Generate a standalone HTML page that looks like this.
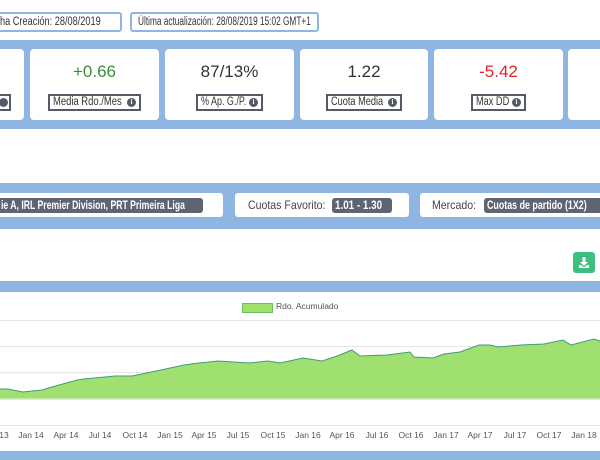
<!DOCTYPE html>
<html><head><meta charset="utf-8"><style>
*{box-sizing:border-box;margin:0;padding:0}
body{width:600px;height:460px;overflow:hidden;background:#fff;font-family:"Liberation Sans",sans-serif;color:#333;position:relative}
.abs{position:absolute}
.n{display:inline-block;transform:scaleX(.76);transform-origin:0 50%;white-space:nowrap}
.tb{position:absolute;top:12px;height:20px;border:2px solid #8fb6e3;border-radius:3px;font-size:11.5px;line-height:16px;padding:0 6px;white-space:nowrap;color:#333;overflow:hidden}
.band{position:absolute;left:0;width:600px;background:#8fb6e3}
.card{position:absolute;top:49px;height:71px;background:#fff;border-radius:4px;text-align:center}
.val{position:absolute;top:13px;left:0;right:0;font-size:17px}
.lab{position:absolute;top:45px;height:17px;border:2px solid #555a66;font-size:11.5px;line-height:13px;padding:0 3px;white-space:nowrap;color:#333;overflow:hidden;text-align:left}
.i{position:absolute;top:2px;right:3px;width:9px;height:9px;border-radius:50%;background:#555a66;color:#fff;font-size:7px;line-height:9px;text-align:center;font-weight:bold;font-family:"Liberation Serif",serif}
.fb{position:absolute;top:193px;height:24px;background:#fff;border-radius:3px;font-size:12px;line-height:24px;white-space:nowrap;color:#444;overflow:hidden}
.bd{position:absolute;top:5px;height:15px;background:#5f6472;color:#fff;font-weight:bold;border-radius:3px;padding:0 3px;line-height:15px;font-size:12px;overflow:hidden}
.xl{position:absolute;top:430px;font-size:8.5px;color:#555;transform:translateX(-50%);white-space:nowrap}
</style></head><body>
<div class="tb" style="left:-8px;width:130px"><span class="n" style="transform:scaleX(.8)">ha Creación: 28/08/2019</span></div>
<div class="tb" style="left:130px;width:189px"><span class="n" style="transform:scaleX(.72)">Última actualización: 28/08/2019 15:02 GMT+1</span></div>

<div class="band" style="top:40px;height:89px"></div>
<div class="card" style="left:-10px;width:34px"><div class="lab" style="left:10px;width:11px;border-left:none;padding:0"><span class="i" style="right:1px"></span></div></div>
<div class="card" style="left:30px;width:129px"><div class="val" style="color:#3c8a3c">+0.66</div><div class="lab" style="left:18px;width:93px"><span class="n" style="transform:scaleX(.82)">Media Rdo./Mes</span><span class="i">i</span></div></div>
<div class="card" style="left:165px;width:129px"><div class="val">87/13%</div><div class="lab" style="left:31px;width:67px"><span class="n" style="transform:scaleX(.78)">% Ap. G./P.</span><span class="i">i</span></div></div>
<div class="card" style="left:300px;width:128px"><div class="val">1.22</div><div class="lab" style="left:26px;width:76px"><span class="n" style="transform:scaleX(.8)">Cuota Media</span><span class="i">i</span></div></div>
<div class="card" style="left:434px;width:129px"><div class="val" style="color:#e0242c">-5.42</div><div class="lab" style="left:37px;width:55px"><span class="n" style="transform:scaleX(.8)">Max DD</span><span class="i">i</span></div></div>
<div class="card" style="left:568px;width:40px"></div>

<div class="band" style="top:183px;height:46px"></div>
<div class="fb" style="left:-10px;width:233px"><span class="bd" style="left:8px;width:205px"><span class="n" style="transform:scaleX(.72)">ie A, IRL Premier Division, PRT Primeira Liga</span></span></div>
<div class="fb" style="left:235px;width:174px"><span class="n" style="position:absolute;left:13px;transform:scaleX(.88)">Cuotas Favorito:</span><span class="bd" style="left:97px;width:60px"><span class="n" style="transform:scaleX(.82)">1.01 - 1.30</span></span></div>
<div class="fb" style="left:420px;width:190px"><span class="n" style="position:absolute;left:12px;transform:scaleX(.88)">Mercado:</span><span class="bd" style="left:64px;width:130px"><span class="n" style="transform:scaleX(.74)">Cuotas de partido (1X2)</span></span></div>

<div class="abs" style="left:573px;top:252px;width:22px;height:21px;background:#3dbf82;border-radius:3px">
<svg width="22" height="21" viewBox="0 0 22 21"><path d="M9.5 5h3v5h2.5l-4 4-4-4h2.5z M6 13h2l3 2.5 3-2.5h2v3H6z" fill="#fff"/></svg></div>

<div class="band" style="top:281px;height:11px"></div>
<div class="abs" style="left:242px;top:303px;width:31px;height:10px;background:#a0e070;border:1px solid #6cbf5a"></div>
<div class="abs" style="left:276px;top:301px;font-size:8.5px;color:#555">Rdo. Acumulado</div>

<svg class="abs" style="left:0;top:292px" width="600" height="160" viewBox="0 292 600 160">
<g stroke="#e6e6e6" stroke-width="1"><line x1="0" y1="320.5" x2="600" y2="320.5"/><line x1="0" y1="346.5" x2="600" y2="346.5"/><line x1="0" y1="372.5" x2="600" y2="372.5"/><line x1="0" y1="425.5" x2="600" y2="425.5"/></g>
<path d="M0 389 L8 389 L23 392 L42 390 L52 387 L77 380 L84 379 L115 376 L132 376 L161 370 L184 365 L199 363 L218 361 L249 363 L268 361 L280 363 L303 358 L322 361 L337 356 L352 350 L360 356 L387 355 L410 352 L414 357 L433 358 L444 354 L460 352 L479 345 L490 345 L498 347 L521 345 L544 344 L563 340 L571 345 L594 339 L600 341 L600 399 L0 399 Z" fill="#a0e070"/>
<path d="M0 389 L8 389 L23 392 L42 390 L52 387 L77 380 L84 379 L115 376 L132 376 L161 370 L184 365 L199 363 L218 361 L249 363 L268 361 L280 363 L303 358 L322 361 L337 356 L352 350 L360 356 L387 355 L410 352 L414 357 L433 358 L444 354 L460 352 L479 345 L490 345 L498 347 L521 345 L544 344 L563 340 L571 345 L594 339 L600 341" fill="none" stroke="#3f9c78" stroke-width="1"/>
<line x1="0" y1="399" x2="600" y2="399" stroke="#cfe9c0" stroke-width="1.5"/>
</svg>
<div class="xl" style="left:4px">13</div>
<div class="xl" style="left:31px">Jan 14</div>
<div class="xl" style="left:66px">Apr 14</div>
<div class="xl" style="left:100px">Jul 14</div>
<div class="xl" style="left:135px">Oct 14</div>
<div class="xl" style="left:170px">Jan 15</div>
<div class="xl" style="left:204px">Apr 15</div>
<div class="xl" style="left:238px">Jul 15</div>
<div class="xl" style="left:273px">Oct 15</div>
<div class="xl" style="left:308px">Jan 16</div>
<div class="xl" style="left:342px">Apr 16</div>
<div class="xl" style="left:377px">Jul 16</div>
<div class="xl" style="left:411px">Oct 16</div>
<div class="xl" style="left:446px">Jan 17</div>
<div class="xl" style="left:480px">Apr 17</div>
<div class="xl" style="left:515px">Jul 17</div>
<div class="xl" style="left:549px">Oct 17</div>
<div class="xl" style="left:584px">Jan 18</div>
<div class="band" style="top:451px;height:9px"></div>
</body></html>
